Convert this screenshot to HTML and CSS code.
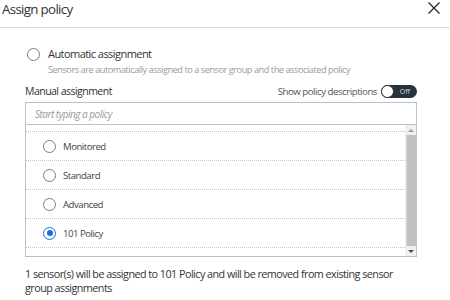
FILE: index.html
```html
<!DOCTYPE html>
<html lang="en">
<head>
    <meta charset="UTF-8">
    <title>Assign policy</title>
    <link rel="stylesheet" href="styles.css">
</head>
<body>

    <div class="dialog-head">
        <h1 class="dialog-title">Assign policy</h1>
        <button class="close-btn" aria-label="Close">
            <svg width="12" height="12" viewBox="0 0 12 12">
                <path d="M0.5 0.5 L11.5 11.5 M11.5 0.5 L0.5 11.5" stroke="#222" stroke-width="1.2" fill="none"/>
            </svg>
        </button>
    </div>

    <div class="dialog-body">
        <label class="auto-option">
            <span class="radio"></span>
            <span>Automatic assignment</span>
        </label>
        <p class="auto-desc">Sensors are automatically assigned to a sensor group and the associated policy</p>

        <div class="manual-head">
            <span>Manual assignment</span>
            <div class="toggle-wrap">
                <span>Show policy descriptions</span>
                <span class="toggle">Off</span>
            </div>
        </div>

        <div class="picker">
            <input class="picker-input" type="text" placeholder="Start typing a policy">
            <div class="policy-list">
                <div class="rows">
                    <div class="row"><span class="radio"></span>Monitored</div>
                    <div class="row"><span class="radio"></span>Standard</div>
                    <div class="row"><span class="radio"></span>Advanced</div>
                    <div class="row"><span class="radio checked"></span>101 Policy</div>
                    <div class="row"></div>
                </div>
                <div class="scrollbar">
                    <span class="arrow up"></span>
                    <span class="thumb"></span>
                    <span class="arrow down"></span>
                </div>
            </div>
        </div>

        <p class="summary">1 sensor(s) will be assigned to 101 Policy and will be removed from existing sensor group assignments</p>
    </div>

</body>
</html>
```

FILE: styles.css
```css
body {
    margin: 0;
    font-family: 'Open Sans', sans-serif;
    color: #3a3a3a;
    background: #fff;
}

.dialog-head {
    display: flex;
    justify-content: space-between;
    align-items: flex-start;
    height: 27px;
    padding: 0 10px 0 2px;
    border-bottom: 1px solid #dcdcdc;
}

.dialog-title {
    margin: 0;
    font-size: 13.3px;
    font-weight: 400;
    letter-spacing: -0.05em;
    line-height: 18px;
    color: #333;
}

.close-btn {
    border: none;
    background: none;
    padding: 0;
    margin-top: 2px;
    width: 12px;
    height: 12px;
    cursor: pointer;
}

.close-btn svg {
    display: block;
}

.dialog-body {
    padding: 18px 33px 0 25px;
}

.radio {
    width: 13px;
    height: 13px;
    box-sizing: border-box;
    border: 1px solid #7a7a7a;
    border-radius: 50%;
    background: #fff;
    flex: none;
    display: flex;
    align-items: center;
    justify-content: center;
}

.radio.checked {
    border: 1.5px solid #1b6fd6;
}

.radio.checked::after {
    content: '';
    width: 6px;
    height: 6px;
    border-radius: 50%;
    background: #1b6fd6;
}

.auto-option {
    display: flex;
    align-items: center;
    gap: 8px;
    padding-left: 2px;
    font-size: 11px;
    letter-spacing: -0.05em;
    line-height: 16px;
    color: #333;
}

.auto-desc {
    margin: 1px 0 0 23px;
    font-size: 9.2px;
    letter-spacing: -0.05em;
    line-height: 14px;
    color: #9b9b9b;
}

.manual-head {
    display: flex;
    justify-content: space-between;
    align-items: center;
    height: 16px;
    margin-top: 6px;
    font-size: 10.5px;
    letter-spacing: -0.05em;
    color: #333;
}

.toggle-wrap {
    display: flex;
    align-items: center;
    gap: 4px;
    font-size: 9.7px;
    letter-spacing: -0.05em;
    color: #555;
}

.toggle {
    position: relative;
    width: 36px;
    height: 13px;
    box-sizing: border-box;
    border-radius: 7px;
    background: #27333c;
    color: #ddd;
    font-size: 7px;
    letter-spacing: 0;
    line-height: 13px;
    text-align: right;
    padding-right: 7px;
}

.toggle::before {
    content: '';
    position: absolute;
    left: 0;
    top: 0;
    width: 13px;
    height: 13px;
    box-sizing: border-box;
    border: 1.5px solid #27333c;
    border-radius: 50%;
    background: #fff;
}

.picker {
    margin-top: 3px;
    border: 1px solid #b6c2cd;
}

.picker-input {
    display: block;
    width: 100%;
    height: 22px;
    box-sizing: border-box;
    margin: 0;
    border: none;
    border-bottom: 1px solid #b6c2cd;
    padding: 0 9px;
    font-family: inherit;
    font-size: 10px;
    font-style: italic;
    letter-spacing: -0.05em;
    outline: none;
}

.picker-input::placeholder {
    color: #9a9a9a;
}

.policy-list {
    display: flex;
    height: 131px;
}

.rows {
    flex: 1;
    overflow: hidden;
    padding-top: 6px;
}

.row {
    display: flex;
    align-items: center;
    gap: 7px;
    height: 29px;
    box-sizing: border-box;
    padding-left: 17px;
    border-top: 1px dotted #c4c4c4;
    font-size: 9.6px;
    letter-spacing: -0.05em;
    color: #444;
}

.scrollbar {
    width: 11px;
    background: #f0f0f0;
    display: flex;
    flex-direction: column;
    align-items: center;
}

.arrow {
    width: 0;
    height: 0;
    border-left: 3px solid transparent;
    border-right: 3px solid transparent;
    margin: 4px 0 3px;
}

.arrow.up {
    border-bottom: 3px solid #a0a0a0;
}

.arrow.down {
    border-top: 3px solid #505050;
}

.thumb {
    flex: 1;
    width: 10px;
    background: #c1c1c1;
    border-left: 1px solid #d4d4d4;
    box-sizing: border-box;
}

.summary {
    margin: 10px 0 0;
    font-size: 10.8px;
    letter-spacing: -0.05em;
    line-height: 14px;
    color: #333;
}
```
